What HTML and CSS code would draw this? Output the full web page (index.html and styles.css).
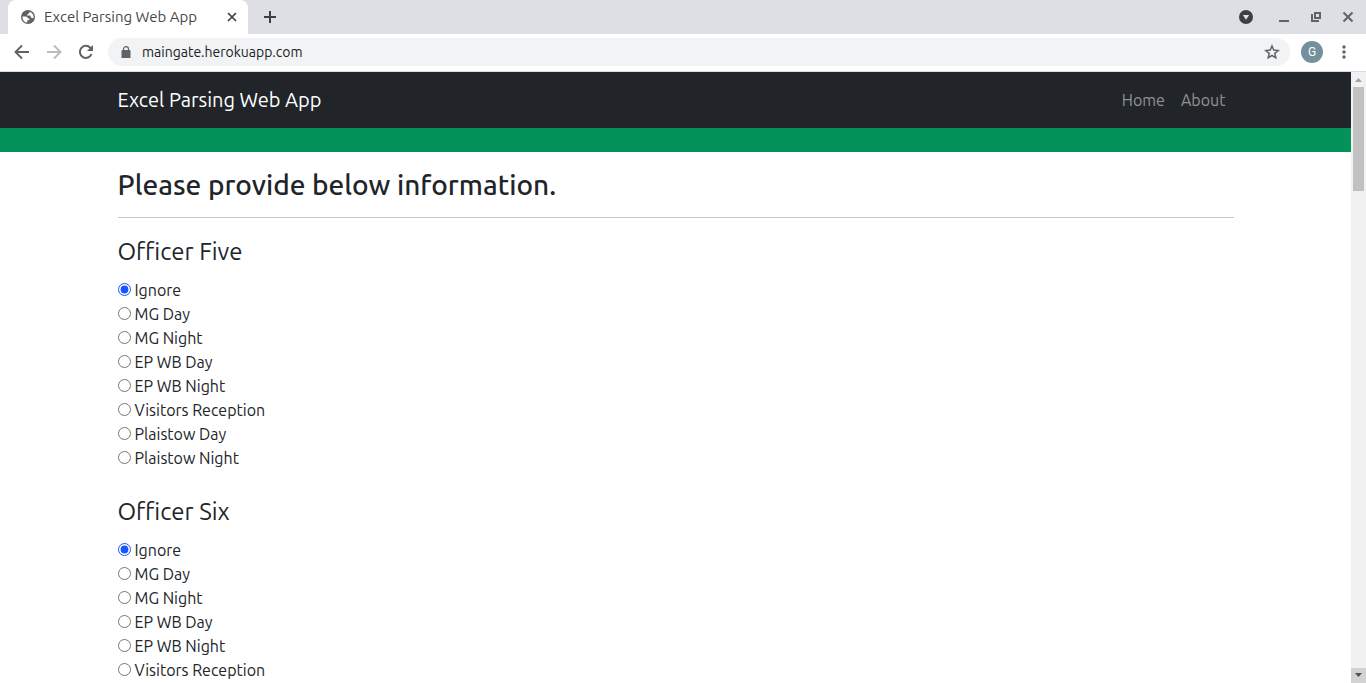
FILE: index.html
```html
<!DOCTYPE html>
<html lang="en">
<head>
<meta charset="utf-8">
<title>Excel Parsing Web App</title>
<link rel="stylesheet" href="styles.css">
</head>
<body>
<header class="browser">
  <div class="tabstrip">
    <div class="tab">
      <svg class="tab-icon" width="14" height="14" viewBox="0 0 14 14"><circle cx="7" cy="7" r="7" fill="#5f6368"/><path d="M1.500 6.400H4.300C6 6.400 6.900 7.300 6.900 8.500H8.300V10.200H6.200V12.500C3.300 12.200 1.300 9.800 1.500 6.400zM8.600 1.700C11 2.400 12.600 4.500 12.600 7 12.600 7.500 12.500 8 12.400 8.400 12 7.900 11.500 7.700 10.900 7.700H9.800V6.500C9.800 5.900 9.400 5.600 8.900 5.600H6V4.400H6.800C7.300 4.400 7.600 4 7.600 3.600V3H8C8.500 3 8.800 2.300 8.600 1.700z" fill="#fff"/></svg>
      <span class="tab-title">Excel Parsing Web App</span>
      <button class="icon-button tab-close" aria-label="Close tab"><svg width="10" height="10" viewBox="0 0 10 10"><path d="M1 1l8 8M9 1L1 9" stroke="#3c4043" stroke-width="1.700"/></svg></button>
    </div>
    <button class="icon-button new-tab" aria-label="New tab"><svg width="12" height="12" viewBox="0 0 12 12"><path d="M6 0v12M0 6h12" stroke="#3c4043" stroke-width="2"/></svg></button>
    <div class="window-controls">
      <button class="icon-button" aria-label="Search tabs"><svg width="14" height="14" viewBox="0 0 14 14"><circle cx="7" cy="7" r="7" fill="#3c4043"/><path d="M3.800 5h6.400L7 9.700z" fill="#dee1e6"/></svg></button>
      <button class="icon-button" aria-label="Minimize"><svg width="12" height="12" viewBox="0 0 12 12"><path d="M1 10h10" stroke="#5f6368" stroke-width="2"/></svg></button>
      <button class="icon-button" aria-label="Restore"><svg width="12" height="12" viewBox="0 0 12 12"><path d="M5 2h5v5H5zM2 3v7h7" fill="none" stroke="#5f6368" stroke-width="2"/></svg></button>
      <button class="icon-button" aria-label="Close window"><svg width="12" height="12" viewBox="0 0 12 12"><path d="M1.500 1.500l9 9M10.500 1.500l-9 9" stroke="#5f6368" stroke-width="2"/></svg></button>
    </div>
  </div>
  <div class="toolbar">
    <button class="icon-button" aria-label="Back"><svg width="16" height="16" viewBox="0 0 16 16"><path d="M15 8H2M8 1.500L1.500 8 8 14.500" fill="none" stroke="#5f6368" stroke-width="1.900"/></svg></button>
    <button class="icon-button" aria-label="Forward"><svg width="16" height="16" viewBox="0 0 16 16"><path d="M1 8h13M8 1.500L14.500 8 8 14.500" fill="none" stroke="#babcbe" stroke-width="1.900"/></svg></button>
    <button class="icon-button" aria-label="Reload"><svg width="16" height="16" viewBox="0 0 16 16"><path d="M13.500 10A6 6 0 1 1 12.300 3.800L14 5.500" fill="none" stroke="#5f6368" stroke-width="2"/><path d="M15 1v6H9z" fill="#5f6368"/></svg></button>
    <div class="address">
      <svg width="10" height="12" viewBox="0 0 10 12"><path d="M1 4.500h8V12H1z" fill="#5f6368" stroke="#5f6368" stroke-width="1"/><path d="M2.500 5V3a2.500 2.300 0 0 1 5 0v2" fill="none" stroke="#5f6368" stroke-width="1.200"/></svg>
      <input class="url" type="text" value="maingate.herokuapp.com" aria-label="Address">
      <button class="icon-button" aria-label="Bookmark"><svg width="16" height="16" viewBox="0 0 16 16"><path d="M8 2l1.700 4.100 4.500.4-3.400 2.900 1 4.400L8 11.500l-3.800 2.300 1-4.400L1.800 6.500l4.500-.4z" fill="none" stroke="#5f6368" stroke-width="1.500"/></svg></button>
    </div>
    <button class="avatar" aria-label="Profile">G</button>
    <button class="icon-button" aria-label="Menu"><svg width="4" height="14" viewBox="0 0 4 14"><g fill="#5f6368"><circle cx="2" cy="2" r="1.700"/><circle cx="2" cy="7" r="1.700"/><circle cx="2" cy="12" r="1.700"/></g></svg></button>
  </div>
</header>
<div class="viewport">
  <div class="page">
    <nav class="navbar">
      <div class="container navbar-inner">
        <a class="brand" href="#">Excel Parsing Web App</a>
        <div class="nav-links"><a href="#">Home</a><a href="#">About</a></div>
      </div>
    </nav>
    <div class="stripe"></div>
    <main class="container">
      <h1 class="page-title">Please provide below information.</h1>
      <form>
        <fieldset class="group">
          <legend>Officer Five</legend>
          <label><input type="radio" name="five" checked>Ignore</label>
          <label><input type="radio" name="five">MG Day</label>
          <label><input type="radio" name="five">MG Night</label>
          <label><input type="radio" name="five">EP WB Day</label>
          <label><input type="radio" name="five">EP WB Night</label>
          <label><input type="radio" name="five">Visitors Reception</label>
          <label><input type="radio" name="five">Plaistow Day</label>
          <label><input type="radio" name="five">Plaistow Night</label>
        </fieldset>
        <fieldset class="group">
          <legend>Officer Six</legend>
          <label><input type="radio" name="six" checked>Ignore</label>
          <label><input type="radio" name="six">MG Day</label>
          <label><input type="radio" name="six">MG Night</label>
          <label><input type="radio" name="six">EP WB Day</label>
          <label><input type="radio" name="six">EP WB Night</label>
          <label><input type="radio" name="six">Visitors Reception</label>
        </fieldset>
      </form>
    </main>
  </div>
  <div class="scrollbar">
    <svg class="arrow" width="15" height="15" viewBox="0 0 15 15"><path d="M4 10h7L7.500 6z" fill="#a3a3a3"/></svg>
    <div class="track"><div class="thumb"></div></div>
    <svg class="arrow arrow-down" width="15" height="15" viewBox="0 0 15 15"><path d="M4 5h7L7.500 9z" fill="#505050"/></svg>
  </div>
</div>
</body>
</html>
```
FILE: styles.css
```css
* { box-sizing: border-box; }
body {
  margin: 0;
  height: 100vh;
  display: flex;
  flex-direction: column;
  overflow: hidden;
  background: #fff;
  color: #212529;
  font: 16px/24px "Ubuntu", "Noto Sans", sans-serif;
}
svg { display: block; flex: none; }
a { text-decoration: none; }
.icon-button {
  border: 0;
  padding: 0;
  background: none;
  display: flex;
  align-items: center;
  justify-content: center;
}
.tabstrip {
  display: flex;
  align-items: center;
  height: 34px;
  padding: 0 12px 0 8px;
  background: #dedfe4;
}
.tab {
  display: flex;
  align-items: center;
  gap: 9px;
  width: 240px;
  height: 34px;
  padding: 0 11px 0 13px;
  background: #fff;
  border-radius: 8px 8px 0 0;
}
.tab-title {
  flex: 1;
  font-size: 15px;
  color: #45494d;
  white-space: nowrap;
}
.new-tab { margin-left: 16px; }
.window-controls {
  display: flex;
  align-items: center;
  gap: 20px;
  margin-left: auto;
}
.window-controls .icon-button:first-child { margin-right: 5px; }
.toolbar {
  display: flex;
  align-items: center;
  gap: 16px;
  height: 38px;
  padding: 0 20px 2px 14px;
  border-bottom: 1px solid #dadce0;
}
.address {
  display: flex;
  align-items: center;
  flex: 1;
  gap: 11px;
  height: 28px;
  margin-left: -2px;
  margin-right: -5px;
  padding: 0 10px 0 13px;
  border-radius: 14px;
  background: #f1f3f4;
}
.url {
  flex: 1;
  min-width: 0;
  padding: 0;
  border: 0;
  background: none;
  color: #202124;
  font: inherit;
  font-size: 14px;
}
.avatar {
  width: 22px;
  height: 22px;
  margin-right: 3px;
  padding: 0;
  border: 0;
  border-radius: 50%;
  background: #73909c;
  color: #fff;
  font: 12px/22px Roboto, sans-serif;
  text-align: center;
}
.viewport {
  display: flex;
  flex: 1;
  min-height: 0;
}
.page {
  flex: 1;
  overflow: hidden;
}
.container {
  max-width: 1140px;
  margin: 0 auto;
  padding: 0 12px;
}
.navbar {
  background: #212529;
  padding: 8px 0;
}
.navbar-inner {
  display: flex;
  align-items: center;
  justify-content: space-between;
  height: 40px;
}
.brand {
  font-size: 20px;
  color: #fff;
}
.nav-links { display: flex; }
.nav-links a {
  padding: 0 8px;
  color: #909294;
}
.stripe {
  height: 24px;
  background: #039259;
}
.page-title {
  margin: 0 0 18px;
  padding: 16px 0 15px;
  border-bottom: 1px solid #c8c9ca;
  font-size: 28px;
  line-height: 34px;
  font-weight: 500;
}
.group {
  margin: 0 0 26px;
  padding: 0;
  border: 0;
}
.group legend {
  padding: 0 0 10px;
  font-size: 24px;
  line-height: 32px;
}
.group label {
  display: flex;
  align-items: center;
  gap: 4px;
}
.group input {
  width: 13px;
  height: 13px;
  margin: 0 0 2px;
  accent-color: #1a56ff;
}
.scrollbar {
  display: flex;
  flex-direction: column;
  width: 15px;
  background: #f1f1f1;
}
.track {
  flex: 1;
  padding: 0 2px;
}
.thumb {
  height: 104px;
  background: #c1c1c1;
}
.arrow-down { background: #d2d2d2; }
```
